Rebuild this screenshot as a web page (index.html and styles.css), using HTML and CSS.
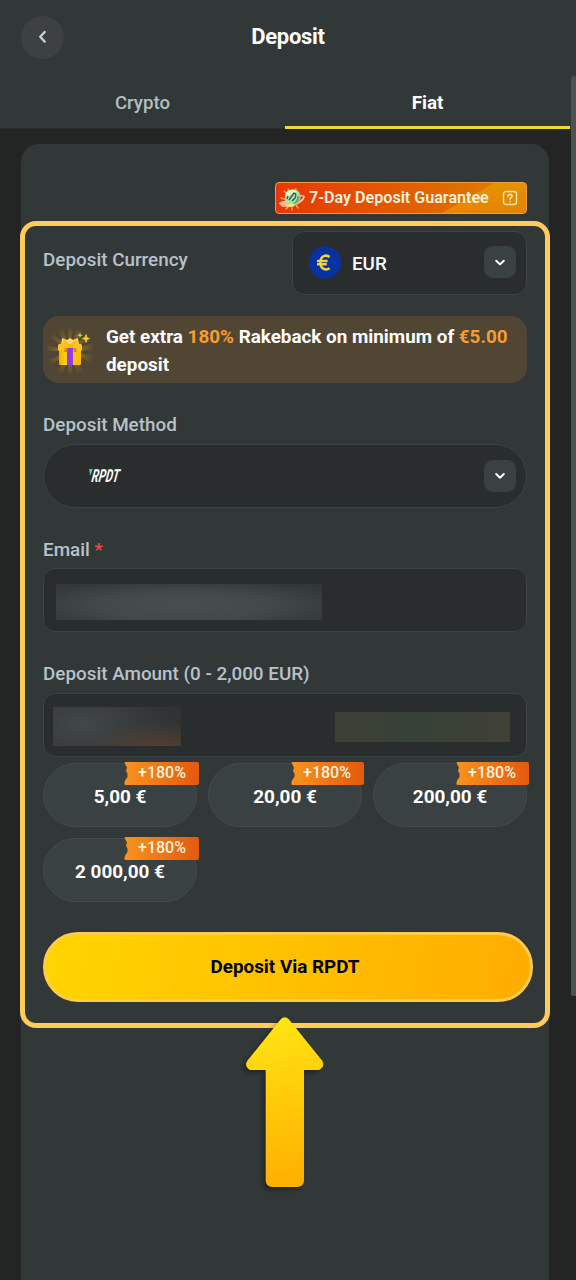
FILE: index.html
```html
<!DOCTYPE html>
<html lang="en">
<head>
<meta charset="utf-8">
<title>Deposit</title>
<link rel="stylesheet" href="styles.css">
</head>
<body>
<div class="screen">
  <header class="header">
    <button class="back" aria-label="Back"><svg width="44" height="44" viewBox="0 0 44 44"><path d="M23.7 16 L19.2 20.8 L23.7 25.6" fill="none" stroke="#c9d0d6" stroke-width="2.3" stroke-linecap="round" stroke-linejoin="round"/></svg></button>
    <h1 class="title">Deposit</h1>
  </header>
  <nav class="tabs">
    <div class="tab"><span>Crypto</span></div>
    <div class="tab active"><span>Fiat</span></div>
  </nav>
  <main class="panel">
    <div class="guarantee">
      <svg class="coin" width="28" height="26" viewBox="0 0 28 26">
        <g stroke="#ffa648" stroke-width="1.4" stroke-linecap="round"><path d="M6 5l3 3M4 20l4-2M8 23l3-3M14 24v-3M20 22l-2-3M10 3l2 3M18 3l-2 3M3 12l4 1"/></g>
        <path d="M1 17q3-2 6-2l13 1q6-3 6-8q2 6-4 9q-8 5-15 4q-5-1-6-4z" fill="#ffb27c"/>
        <path d="M8 6q6-5 12-1q4 4 2 9l-5 5q-8 1-10-4q-1-5 1-9z" fill="#a9e3a4"/>
        <path d="M8 7q4-5 11-2l-10 6z" fill="#e9fbcb"/>
        <path d="M17 18q5-2 5-10l-3 3q0 4-4 6z" fill="#5fae86"/>
        <path d="M11 14l5-7q3 1 1 5l-3 3M10 10l-1 3" fill="none" stroke="#2e5b45" stroke-width="1.3"/>
        <path d="M21 10q4-1 5 1q0 2-5 5M2 18q3-3 7-2" fill="none" stroke="#ecc3cc" stroke-width="1.300"/>
        <path d="M8 19l6-1 3 2-5 1z" fill="#ffe96b"/>
      </svg>
      <span class="guarantee-text">7-Day Deposit Guarantee</span>
      <svg class="help" width="16" height="16" viewBox="0 0 16 16" fill="none" stroke="#ffe6b8" stroke-linecap="round" stroke-linejoin="round"><rect x="1.5" y="1.5" width="13" height="13" rx="2.5" stroke-width="1.4"/><path d="M6 6.3c0-2.6 4-2.5 4 0C10 7.8 8 7.7 8 9.2M8 11.5v.1" stroke-width="1.6"/></svg>
    </div>
    <section class="form">
      <div class="currency-row">
        <span class="label">Deposit Currency</span>
        <div class="select currency">
          <svg width="34" height="34" viewBox="0 0 34 34"><circle cx="17" cy="16.500" r="16.2" fill="#0832a0"/><path d="M21.600 11C18.500 8.500 12.400 9.200 12.400 16.500s6.100 8 9.200 5.700M9 15H19.600M9 18.200H18.800" fill="none" stroke="#f2d33f" stroke-width="2.500"/></svg>
          <span class="currency-code">EUR</span>
          <span class="chevron"><svg width="32" height="32" viewBox="0 0 32 32"><path d="M12.200 14.700L16 18.400L19.800 14.700" fill="none" stroke="#fff" stroke-width="2" stroke-linecap="round" stroke-linejoin="round"/></svg></span>
        </div>
      </div>
      <div class="promo">
        <svg class="gift" width="48" height="54" viewBox="0 0 48 54">
          <defs>
            <radialGradient id="glow" gradientUnits="userSpaceOnUse" cx="23" cy="28" r="26"><stop offset="0" stop-color="#c8a421" stop-opacity=".8"/><stop offset=".5" stop-color="#a38a22" stop-opacity=".45"/><stop offset=".95" stop-color="#a38a22" stop-opacity="0"/></radialGradient>
            <linearGradient id="box"><stop offset="0" stop-color="#f5a800"/><stop offset=".25" stop-color="#ffcf12"/><stop offset="1" stop-color="#ffb80a"/></linearGradient>
          </defs>
          <path fill="url(#glow)" d="M23 28L20 2h6zM23 28L9 5l6-3zM23 28L31 2l6 4zM23 28L1 13l4-5zM23 28L42 8l4 6zM23 28L0 22v6zM23 28L46 20v7zM23 28L0 38l3 5zM23 28L47 33l-3 7zM23 28L9 50l6 3zM23 28L20 54h6zM23 28L31 52l6-3z"/>
          <path d="M15 15l5 2 3-2 3 2 5-2 1 7H14z" fill="#ffd767"/>
          <path d="M17 16l5 5-7 1zM29 16l-5 5 7 1z" fill="#ffb833"/>
          <rect x="12" y="25" width="22" height="17" rx="1.500" fill="url(#box)"/>
          <rect x="11" y="21" width="24" height="7" rx="1.500" fill="#ffc41b"/>
          <path d="M20 25h6v17h-6z" fill="#8e3fe3"/><path d="M20 21h6v4h-6z" fill="#ffb31a"/><path d="M18 25h3l-1 4h-3zM26 25h3l1 4h-3z" fill="#d98613"/>
          <path d="M39 11.500q0 4 3.500 4-3.500 0-3.500 4 0-4-3.500-4 3.500 0 3.500-4z" fill="#ffd51f" stroke="#ffd51f" stroke-width=".8"/><path d="M33 10v4.500M30.800 12.300h4.500" stroke="#b8d934" stroke-width="1.200"/>
        </svg>
        <p class="promo-text">Get extra <b>180%</b> Rakeback on minimum of <b>€5.00</b><br>deposit</p>
      </div>
      <span class="label stacked">Deposit Method</span>
      <div class="select method">
        <svg class="logo" width="80" height="24" viewBox="0 0 80 24"><path d="M1 5h3.800L2.200 12z" fill="#62c58b"/><text class="logo-text" transform="translate(2.600 18.400) skewX(-15) scale(.6 1)">RPDT</text></svg>
        <span class="chevron"><svg width="32" height="32" viewBox="0 0 32 32"><path d="M12.200 14L16 17.700L19.800 14" fill="none" stroke="#fff" stroke-width="2" stroke-linecap="round" stroke-linejoin="round"/></svg></span>
      </div>
      <span class="label stacked tight">Email <i class="required">*</i></span>
      <div class="input"><div class="redacted email"></div></div>
      <span class="label stacked">Deposit Amount (0 - 2,000 EUR)</span>
      <div class="input amount"><div class="redacted value"></div><div class="redacted limit"></div></div>
      <div class="chips">
        <div class="chip"><span class="bonus">+180%</span>5,00 €</div>
        <div class="chip"><span class="bonus">+180%</span>20,00 €</div>
        <div class="chip"><span class="bonus">+180%</span>200,00 €</div>
        <div class="chip"><span class="bonus">+180%</span>2 000,00 €</div>
      </div>
      <button class="submit">Deposit Via RPDT</button>
      <svg class="arrow" width="90" height="185" viewBox="0 0 90 185">
        <defs><linearGradient id="arrowFill" x1="0" y1="0" x2=".1" y2="1"><stop offset="0" stop-color="#ffe713"/><stop offset="1" stop-color="#ffb100"/></linearGradient></defs>
        <path fill="url(#arrowFill)" d="M40.500 5.500Q44.700 1 49 5.500L82 46.500Q85.500 52 80 55.500Q79 56 77 56H64V166Q64 173 57 173H32.700Q25.700 173 25.700 166V56H12Q10 56 9 55.500Q4 52 7.500 46.500Z"/>
      </svg>
    </section>
  </main>
  <div class="scrollbar"></div>
</div>
</body>
</html>
```
FILE: styles.css
```css
* { box-sizing: border-box; }
body { margin: 0; background: #232524; font-family: Roboto, "Liberation Sans", sans-serif; color: #fff; }
button { font: inherit; border: 0; padding: 0; }
.screen { position: relative; height: 1280px; overflow: hidden; display: flex; flex-direction: column; }
.header { height: 76px; flex: none; background: #323738; display: grid; grid-template-columns: 44px 1fr 44px; padding: 16px 21px 0; align-items: start; }
.back { width: 43px; height: 43px; border-radius: 50%; background: #3d4142; }
.back svg { display: block; }
.title { margin: 8px 0 0; font-size: 22px; line-height: 26px; font-weight: 700; letter-spacing: -.3px; text-align: center; }
.tabs { height: 53px; flex: none; display: grid; grid-template-columns: 285px 285px; background: #323738; border-bottom: 1px solid #2a2e2e; }
.tab { padding-top: 15px; line-height: 24px; font-size: 18.700px; font-weight: 500; text-align: center; color: #b5bec3; }
.tab.active { height: 53px; color: #fff; font-weight: 700; font-size: 18.800px; border-bottom: 3px solid #f1dc2c; }
.panel { flex: 1; margin: 15px 27px 0 21px; padding-top: 38px; border-radius: 18px 18px 0 0; background: #323738; display: flex; flex-direction: column; }
.guarantee { align-self: flex-end; width: 252px; height: 32px; margin-right: 22px; border: 1px solid #f09b44; border-radius: 4px; display: flex; align-items: center; padding-left: 2px; background: linear-gradient(150deg, transparent 0 72%, rgba(242,174,6,.45) 72.500%, rgba(230,135,0,.2)), linear-gradient(90deg, #e93605, #e06700 65%, #df8500); }
.coin { margin-top: 2px; }
.guarantee-text { width: 180px; margin: -1px 0 0 3px; white-space: nowrap; font-size: 16.100px; font-weight: 600; color: #fff2dc; }
.help { margin-left: 13px; }
.form { position: relative; flex: none; width: 530px; height: 807px; margin: 7px 0 0 -1px; border: 5px solid #ffcb5a; border-radius: 16px; padding: 5px 18px 0; display: flex; flex-direction: column; }
.label { font-size: 18.850px; line-height: 24px; font-weight: 500; color: #b7c2c9; }
.label.stacked { margin: 30px 0 7px; }
.label.stacked.tight { margin-bottom: 6px; }
.required { color: #ed4c4c; font-style: normal; }
.currency-row { height: 64px; display: flex; justify-content: space-between; }
.currency-row .label { padding-top: 17px; }
.currency-row, .promo, .select.method, .input, .chips { width: 484px; flex: none; }
.select, .input { height: 64px; border: 1px solid #3d4344; border-radius: 12px; background: #292d2e; display: flex; align-items: center; }
.currency { width: 235px; padding: 0 10px 1px 15px; }
.currency-code { margin-left: 10px; flex: 1; font-size: 18.800px; font-weight: 500; padding-top: 2px; }
.chevron { width: 32px; height: 32px; border-radius: 9px; background: #3a4142; }
.currency .chevron { margin-bottom: 1px; }
.chevron svg { display: block; }
.promo { height: 67px; margin-top: 21px; border-radius: 16px; background: #514534; display: flex; align-items: center; padding-left: 4px; }
.promo-text { margin: 2px 0 0 11px; font-size: 18.850px; line-height: 28px; font-weight: 700; white-space: nowrap; }
.promo-text b { font-weight: 700; color: #f79c2e; }
.method { border-radius: 32px; justify-content: space-between; padding: 0 10px 0 44px; }
.logo { margin-top: -1px; }
.logo-text { font: 700 18px Roboto, sans-serif; fill: #fff; }
.input { padding: 0 12px; }
.redacted.email { width: 266px; height: 36px; margin-top: 3px; background: radial-gradient(ellipse at 48% 60%, #494d4e 0, #434849 45%, #353a3b 80%, #303435 100%); }
.amount { justify-content: space-between; padding: 0 16px 0 9px; }
.redacted.value { width: 128px; height: 39px; margin-top: 2px; background: radial-gradient(ellipse at 85% 120%, #5c432e, transparent 50%), radial-gradient(ellipse 70% 120% at 22% 45%, #424748, #303334); }
.redacted.limit { width: 175px; height: 30px; margin-top: 3px; background: linear-gradient(90deg, #3e4036, #374137 40%, #3b4137 70%, #414037); }
.label + .input.amount { margin-bottom: 6px; }
.chips { display: grid; grid-template-columns: repeat(3, 154px); column-gap: 11px; row-gap: 11px; }
.chip { position: relative; height: 64px; border: 1px solid #454b4c; border-radius: 32px; background: #3a4142; display: flex; align-items: center; justify-content: center; padding-top: 2px; font-size: 18.900px; font-weight: 700; }
.bonus { position: absolute; top: -3px; right: -3px; width: 75px; height: 23px; padding-left: 14px; line-height: 21px; font-size: 16px; font-weight: 500; color: #fff3df; border-radius: 2px; background: linear-gradient(90deg, #f8941e, #e4590f); clip-path: polygon(0 0, 100% 0, 100% 100%, 0 100%, 1px 80%, 3.500px 65%, 3.500px 50%, 2px 38%, 3px 24%); }
.chip:nth-child(2) .bonus, .chip:nth-child(3) .bonus { width: 73px; padding-left: 12px; }
.chip .bonus { top: -2px; }
.submit { flex: none; width: 490px; height: 70px; margin-top: 30px; border: 3px solid #ffcb4c; border-radius: 35px; background: linear-gradient(100deg, #ffd500, #ffac00); color: #000; font-size: 18.850px; font-weight: 700; padding: 0 6px 0 0; }
.arrow { position: absolute; left: 215px; top: 788px; filter: drop-shadow(-3px 3px 2px rgba(0,0,0,.3)); }
.scrollbar { position: absolute; left: 571px; top: 76px; width: 6px; height: 920px; border-radius: 3px; background: #4b5252; }
```
